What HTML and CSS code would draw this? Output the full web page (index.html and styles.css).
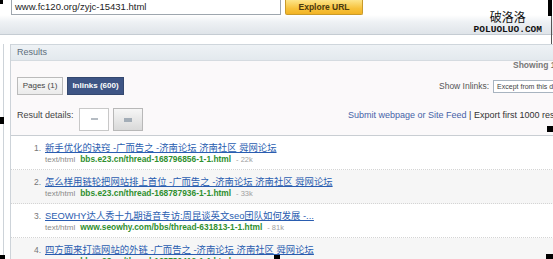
FILE: index.html
```html
<html>
  <head>
    <title>Results</title>
    <link rel="stylesheet" href="styles.css">
  </head>
<body>
<div class="page">

  <div class="toolbar">
    <div class="url-box">www.fc120.org/zyjc-15431.html</div>
    <button class="explore">Explore URL</button>
    <div class="brand">
      <div class="brand-cn">破洛洛</div>
      <div class="brand-en">POLUOLUO.COM</div>
    </div>
  </div>

  <div class="main">
    <div class="panel">
      <div class="panel-head">Results</div>

      <div class="tools">
        <div></div>
        <div class="showing">Showing 1 - 10 of 600</div>

        <div class="tabs">
          <span class="tab">Pages (1)</span>
          <span class="tab active">Inlinks (600)</span>
        </div>
        <div class="filter">
          <span>Show Inlinks:</span>
          <span class="select">Except from this domain</span>
        </div>

        <div class="details">
          <span class="details-label">Result details:</span>
          <span class="view-btn"><i class="dash"></i></span>
          <span class="view-btn on"><i class="block"></i></span>
        </div>
        <div class="actions">
          <a class="link">Submit webpage or Site Feed</a> | Export first 1000 results to TSV
        </div>
      </div>

      <ol class="results">
        <li class="item">
          <span class="num">1.</span>
          <div>
            <a class="title">新手优化的诀窍 -广而告之 -济南论坛 济南社区 舜网论坛</a>
            <div class="meta"><span class="type">text/html</span><span class="addr">bbs.e23.cn/thread-168796856-1-1.html</span><span class="size">- 22k</span></div>
          </div>
        </li>
        <li class="item alt">
          <span class="num">2.</span>
          <div>
            <a class="title">怎么样用链轮把网站排上首位 -广而告之 -济南论坛 济南社区 舜网论坛</a>
            <div class="meta"><span class="type">text/html</span><span class="addr">bbs.e23.cn/thread-168787936-1-1.html</span><span class="size">- 33k</span></div>
          </div>
        </li>
        <li class="item">
          <span class="num">3.</span>
          <div>
            <a class="title">SEOWHY达人秀十九期语音专访:周昆谈英文seo团队如何发展 -...</a>
            <div class="meta"><span class="type">text/html</span><span class="addr">www.seowhy.com/bbs/thread-631813-1-1.html</span><span class="size">- 81k</span></div>
          </div>
        </li>
        <li class="item alt">
          <span class="num">4.</span>
          <div>
            <a class="title">四方面来打造网站的外链 -广而告之 -济南论坛 济南社区 舜网论坛</a>
            <div class="meta"><span class="type">text/html</span><span class="addr">bbs.e23.cn/thread-168780412-1-1.html</span><span class="size">- 30k</span></div>
          </div>
        </li>
      </ol>
    </div>
  </div>

  <!-- selection handles of the pasted picture -->
  <span class="handle h-tl"></span>
  <span class="handle h-tr"></span>
  <span class="edge-r"></span>
  <span class="handle h-ml"></span>
  <span class="handle h-mr"></span>
  <span class="handle h-bl"></span>
  <span class="handle h-bm"></span>
  <span class="handle h-br"></span>
</div>
</body>
</html>
```

FILE: styles.css
```css
* { box-sizing: border-box; }

body {
  margin: 0;
  background: #fff;
  color: #333;
  font-family: "Liberation Sans", Arial, "Noto Sans CJK SC", sans-serif;
}

.page { position: relative; width: 553px; height: 259px; overflow: hidden; }

/* top bar */
.toolbar {
  height: 35px;
  display: flex;
  align-items: flex-start;
  padding-left: 11px;
  background: linear-gradient(#fff 0, #fff 15px, #eef1f4 22px, #dfe4e9 34px);
  border-bottom: 1px solid #c5ccd3;
}
.url-box {
  margin-top: -1px;
  width: 270px;
  height: 16px;
  padding-left: 3px;
  border: 1px solid #9ea6ae;
  background: #fff;
  color: #222;
  font-size: 9.5px;
  line-height: 14px;
}
.explore {
  margin-left: 4px;
  width: 78px;
  height: 15px;
  padding: 0;
  border: 1px solid #c99a2a;
  border-top: none;
  border-radius: 0 0 2px 2px;
  background: linear-gradient(#fde58a, #f7c23c 60%, #f2b324);
  color: #4a3a10;
  font: bold 8.5px "Liberation Sans", Arial, sans-serif;
}
.brand { margin-left: auto; margin-right: 11px; margin-top: 10px; text-align: center; color: #111; }
.brand-cn { font: 12px/13px "Noto Sans CJK SC", sans-serif; }
.brand-en { margin-top: 3px; font: bold 9.5px/8px "Liberation Mono", monospace; }

/* results panel */
.main {
  margin: 9px 0 0 3px;
  padding-left: 6px;
  border-left: 1px solid #cdd3d9;
  height: 230px;
}
.panel { width: 640px; border-left: 1px solid #cdd3d9; }
.panel-head {
  height: 17px;
  padding-left: 6px;
  border-top: 1px solid #cfd6dc;
  border-bottom: 1px solid #d5dbe0;
  background: linear-gradient(#eef2f5, #e3e9ee);
  color: #5c6d7c;
  font-size: 9px;
  line-height: 15px;
}

.tools {
  display: grid;
  grid-template-columns: 331px 1fr;
  padding: 0 0 4px 6px;
  background: #fbf9fa;
  border-bottom: 1px solid #c9ced3;
  white-space: nowrap;
  font-size: 9px;
}
.showing { padding-left: 165px; line-height: 9px; color: #777; font-weight: bold; font-size: 8.5px; }

.tabs { display: flex; gap: 4px; margin-top: 7px; }
.tab {
  height: 18px;
  width: 46px;
  border: 1px solid #bbb;
  background: linear-gradient(#fafafa, #ebebeb);
  color: #444;
  font-size: 8px;
  line-height: 16px;
  text-align: center;
}
.tab.active { width: 57px; border-color: #34486f; background: #3e5585; color: #fff; font-weight: bold; }

.filter { margin-top: 7px; padding-left: 91px; display: flex; align-items: center; gap: 4px; color: #555; font-size: 8.5px; height: 18px; }
.select {
  height: 13px;
  width: 110px;
  padding-left: 3px;
  border: 1px solid #a8b4c0;
  background: #fff;
  color: #444;
  font-size: 7px;
  line-height: 11px;
}

.details { margin-top: 13px; display: flex; align-items: flex-start; gap: 4px; }
.details-label { width: 58px; line-height: 14px; color: #444; font-size: 9px; }
.view-btn {
  width: 30px;
  height: 23px;
  display: flex;
  justify-content: center;
  padding-top: 9px;
  border: 1px solid #c8c8c8;
  background: #fff;
}
.view-btn.on { border-color: #b8b8b8; background: linear-gradient(#f6f6f6, #d9d9d9); }
.dash { display: block; width: 7px; height: 2px; background: #b5bcc3; }
.block { display: block; width: 8px; height: 4px; background: #a3adb7; }

.actions { margin-top: 13px; line-height: 14px; color: #333; font-size: 9px; }
.link { color: #4663a8; }

/* result list */
.results { list-style: none; margin: 0; padding: 0; }
.item {
  display: grid;
  grid-template-columns: 34px 1fr;
  padding: 6px 0 4px;
  border-bottom: 1px dotted #d4d4d4;
}
.item.alt { background: #f6f6f6; }
.num { padding-right: 4px; text-align: right; color: #777; font-size: 8.5px; line-height: 12px; }
.title {
  display: block;
  color: #2a5db0;
  text-decoration: underline;
  font-size: 9.35px;
  line-height: 12px;
  white-space: nowrap;
}
.meta { line-height: 11px; white-space: nowrap; }
.type { color: #8a8a8a; font-size: 8px; }
.addr { margin-left: 5px; color: #2f8f2f; font-weight: bold; font-size: 8.4px; }
.size { margin-left: 5px; color: #a0a0a0; font-size: 7.5px; }

/* picture handles, drawn over everything */
.handle { position: absolute; background: #000; }
.h-tl { left: 0; top: 0; width: 3px; height: 4px; }
.h-tr { left: 548px; top: 0; width: 4px; height: 16px; }
.edge-r { position: absolute; left: 551px; top: 16px; width: 1px; height: 28px; background: #555; }
.h-ml { left: 0; top: 117px; width: 4px; height: 7px; }
.h-mr { left: 547px; top: 126px; width: 6px; height: 6px; }
.h-bl { left: 0; top: 255px; width: 5px; height: 4px; }
.h-bm { left: 274px; top: 255px; width: 6px; height: 4px; }
.h-br { left: 546px; top: 254px; width: 7px; height: 5px; }
```
